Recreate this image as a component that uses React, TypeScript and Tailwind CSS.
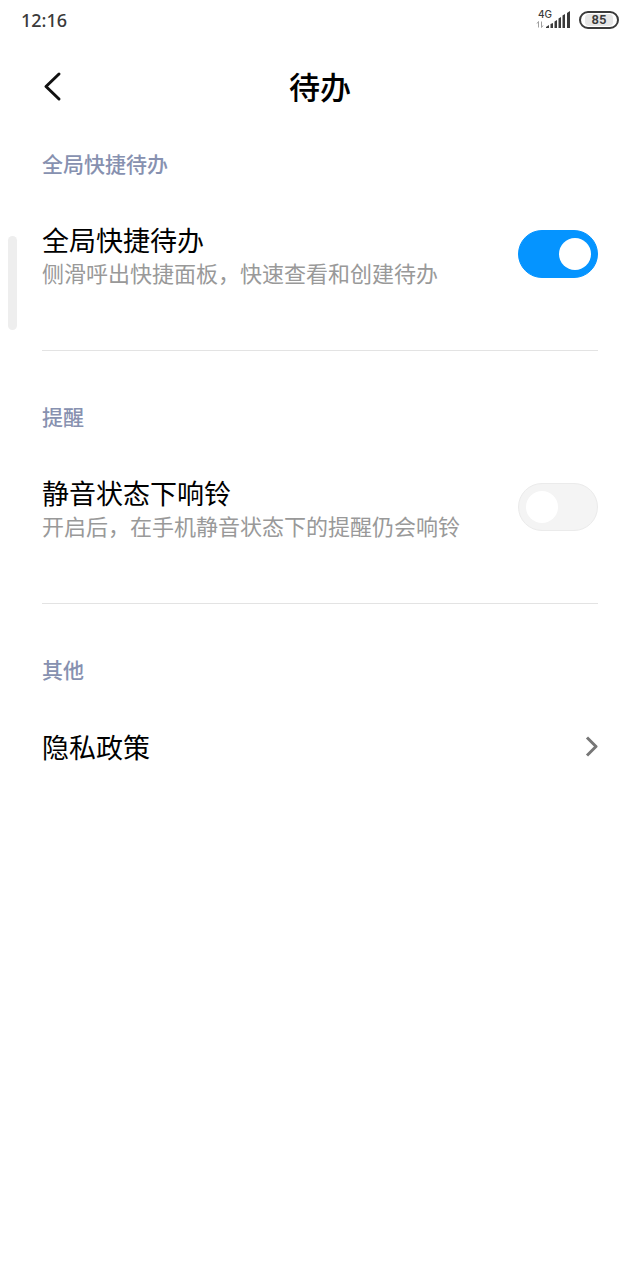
import { useId, useState } from 'react';

interface SettingSwitchProps {
  title: string;
  description: string;
  defaultOn?: boolean;
}

function StatusBar() {
  return (
    <div className="flex h-10 items-center justify-between px-[21px] text-[#3a3a3a]">
      <span className="font-['Noto_Sans',sans-serif] text-[18px] font-medium leading-6">12:16</span>
      <div className="flex items-center gap-2">
        <div className="relative h-5 w-9">
          <span className="absolute left-[3px] top-0 font-['Inter',sans-serif] text-[10px] font-medium leading-2">4G</span>
          <svg className="h-5 w-9" viewBox="0 0 36 20" aria-hidden="true">
            {/* data arrows */}
            <path d="M3.500 17.500v-6l-1.500 2M6.500 11.500v6l1.500-2" fill="none" stroke="#a0a0a0" strokeWidth="1" />
            {/* signal bars */}
            <path
              d="M11 18v-1l3-2v3zM15.500 18v-4l2.500-1v5zM19.500 18v-6.500l2.500-1.500v8zM23.500 18v-9.500l2.500-1.500v11zM27.500 18v-12.500l2.500-1.500v14zM32 18v-15l3-2v17z"
              fill="#3a3a3a"
            />
          </svg>
        </div>
        <div className="flex h-[18px] w-10 items-center justify-center rounded-full border-2 border-[#3a3a3a] p-px">
          <span className="flex h-full w-7 items-center justify-center rounded-sm bg-[#e6e6e6] font-['Roboto',sans-serif] text-[13px] font-semibold leading-3">
            85
          </span>
        </div>
      </div>
    </div>
  );
}

function SettingSwitch({ title, description, defaultOn = false }: SettingSwitchProps) {
  const [on, setOn] = useState(defaultOn);
  const id = useId();

  return (
    <div className="flex items-center justify-between gap-4">
      <label htmlFor={id} className="min-w-0 pb-1">
        <span className="block text-[27px] leading-10 text-black">{title}</span>
        <span className="block text-[22px] leading-6 text-[#999999]">{description}</span>
      </label>
      <input
        id={id}
        type="checkbox"
        role="switch"
        checked={on}
        onChange={(e) => setOn(e.target.checked)}
        className="flex h-12 w-20 shrink-0 appearance-none items-center rounded-full border border-[#ebebeb] bg-[#f4f4f4] px-[7px] before:size-8 before:rounded-full before:bg-white before:content-[''] checked:justify-end checked:border-[#0594ff] checked:bg-[#0594ff] checked:px-[6px]"
      />
    </div>
  );
}

function SectionTitle({ children }: { children: string }) {
  return <h2 className="mb-[43px] text-[21px] font-medium leading-7 text-[#8791b0]">{children}</h2>;
}

export default function App() {
  return (
    <div className="relative min-h-screen w-full bg-white font-['Noto_Sans_CJK_SC',sans-serif]" lang="zh-CN">
      <StatusBar />

      <header className="grid h-[92px] grid-cols-[1fr_auto_1fr] items-center px-[42px]">
        <button type="button" aria-label="返回" className="flex h-10 w-10 items-center">
          <svg className="h-8 w-5" viewBox="0 0 20 32" fill="none" aria-hidden="true">
            <path d="M17 4L4 16.500L17 29" stroke="#111111" strokeWidth="3" strokeLinecap="round" strokeLinejoin="round" />
          </svg>
        </button>
        <h1 className="text-[31px] font-medium leading-10 text-black">待办</h1>
      </header>

      {/* side panel handle */}
      <div className="absolute left-2 top-[236px] h-[94px] w-[9px] rounded-full bg-[#eeeeee]" />

      <main className="px-[42px]">
        <section className="border-b border-[#e3e3e3] pb-[62px] pt-[17px]">
          <SectionTitle>全局快捷待办</SectionTitle>
          <SettingSwitch title="全局快捷待办" description="侧滑呼出快捷面板，快速查看和创建待办" defaultOn />
        </section>

        <section className="border-b border-[#e3e3e3] pb-[62px] pt-[51px]">
          <SectionTitle>提醒</SectionTitle>
          <SettingSwitch title="静音状态下响铃" description="开启后，在手机静音状态下的提醒仍会响铃" />
        </section>

        <section className="pt-[51px]">
          <SectionTitle>其他</SectionTitle>
          <a href="#privacy" className="flex items-center justify-between text-[27px] leading-[42px] text-black">
            隐私政策
            <svg className="h-6 w-4" viewBox="0 0 16 24" fill="none" aria-hidden="true">
              <path d="M5 2.500L14 11.500L5 20.500" stroke="#777777" strokeWidth="3" strokeLinejoin="round" />
            </svg>
          </a>
        </section>
      </main>
    </div>
  );
}
